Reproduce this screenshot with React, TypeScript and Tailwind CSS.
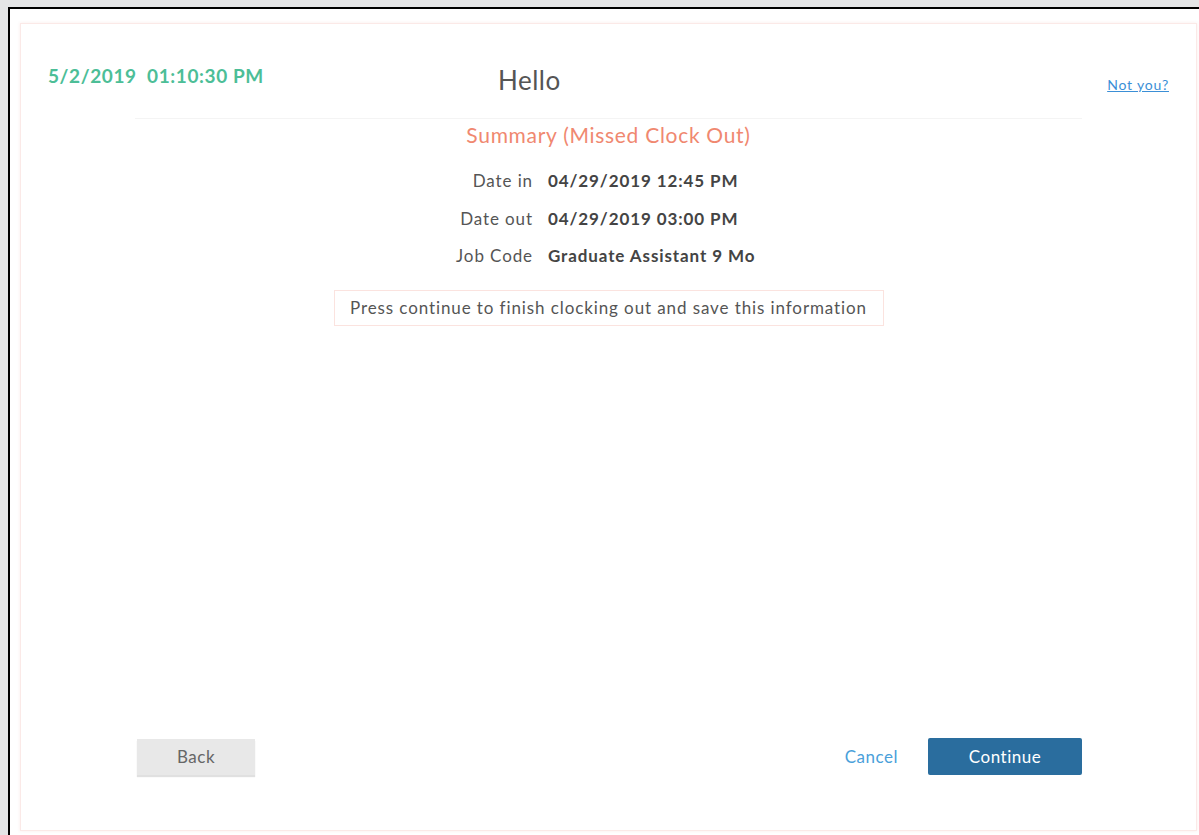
import React from 'react';

const rows = [
  { label: 'Date in', value: '04/29/2019 12:45 PM' },
  { label: 'Date out', value: '04/29/2019 03:00 PM' },
  { label: 'Job Code', value: 'Graduate Assistant 9 Mo' },
];

export default function App() {
  return (
    <div className="h-[835px] w-full overflow-hidden bg-[#e4e5e6] pl-[8px] pt-[7px] font-['Lato','Liberation_Sans',sans-serif]">
      <div className="flex h-full flex-col border-l-2 border-t-2 border-black bg-white pl-[10px] pr-[2px] pt-[14px] pb-[4px]">
        {/* time clock card */}
        <div className="flex flex-1 flex-col border border-[#fbe9e7] px-[27px] pt-[39px] pb-[55px] shadow-[0_0_3px_rgba(240,180,170,0.25)]">
          <div className="flex h-[34px] items-start">
            <div className="w-[450px] text-[19px] leading-[26px] tracking-[0.6px] font-bold text-[#4cbe97]">
              5/2/2019&nbsp;&nbsp;01:10:30 PM
            </div>
            <div className="text-[26px] leading-[34px] tracking-[0.5px] text-[#555]">Hello</div>
            <a href="#" className="ml-auto mt-[14px] text-[14px] leading-[16px] tracking-[0.8px] text-[#3b8fd6] underline">
              Not you?
            </a>
          </div>

          <div className="mx-auto mt-[21px] flex w-[947px] flex-1 flex-col">
            <div className="h-px bg-[#f4f4f4]" />
            <div className="mt-[2px] text-center text-[21px] leading-[28px] tracking-[0.7px] text-[#f08870]">
              Summary (Missed Clock Out)
            </div>

            <div className="mt-[13px] flex flex-col">
              {rows.map((r) => (
                <div key={r.label} className="flex h-[37.5px] items-center gap-[15px] text-[17px] tracking-[0.9px]">
                  <div className="w-[398px] text-right text-[#555]">{r.label}</div>
                  <div className="font-bold text-[#444]">{r.value}</div>
                </div>
              ))}
            </div>

            <div className="mx-auto mt-[15px] flex h-[36px] w-[550px] items-center justify-center border border-[#fbe3df] text-[17px] tracking-[0.9px] text-[#555]">
              Press continue to finish clocking out and save this information
            </div>

            <div className="mt-auto flex items-center pl-[2px]">
              <button className="h-[36px] w-[118px] bg-[#e8e8e8] text-[17px] tracking-[0.5px] text-[#666] shadow-[0_2px_1px_rgba(0,0,0,0.12)]">
                Back
              </button>
              <button className="ml-auto mr-[30px] text-[17px] tracking-[0.5px] text-[#4aa0da]">Cancel</button>
              <button className="h-[37px] w-[154px] rounded-[2px] bg-[#2a6d9e] text-[17px] tracking-[0.5px] text-white">
                Continue
              </button>
            </div>
          </div>
        </div>
      </div>
    </div>
  );
}
